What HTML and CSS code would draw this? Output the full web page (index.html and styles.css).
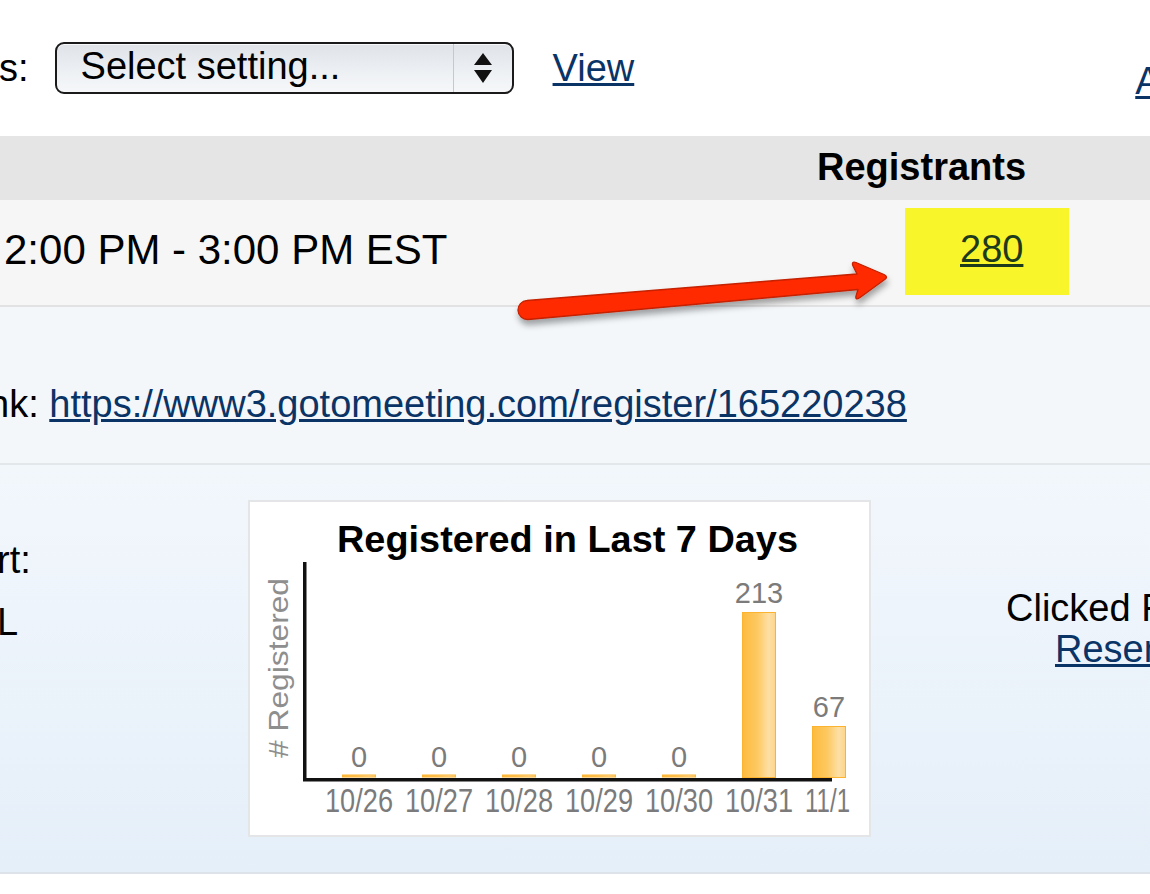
FILE: index.html
```html
<!DOCTYPE html>
<html lang="en">
<head>
    <meta charset="UTF-8">
    <title>Webinar Details</title>
    <link rel="stylesheet" href="styles.css">
</head>
<body>
<div class="page">
    <div class="toolbar">
        <span class="label label-s">s:</span>
        <div class="select">
            <span class="select-text">Select setting...</span>
            <span class="select-arrows">
                <svg width="18" height="30" viewBox="0 0 18 30"><path d="M0 12 L9 0 L18 12 Z M0 17 L18 17 L9 30 Z"/></svg>
            </span>
        </div>
        <a class="link view-link" href="#">View</a>
        <a class="link corner-link" href="#">All Webinars</a>
    </div>

    <div class="table-head">
        <div class="col-when"></div>
        <div class="col-reg">Registrants</div>
    </div>
    <div class="table-row">
        <div class="col-when time">2:00 PM - 3:00 PM EST</div>
        <div class="col-reg">
            <div class="highlight"><a class="count" href="#">280</a></div>
        </div>
    </div>

    <div class="link-row">
        <span class="label label-nk">nk:</span>
        <a class="link" href="#">https://www3.gotomeeting.com/register/165220238</a>
    </div>

    <div class="details">
        <div class="details-labels">
            <div>rt:</div>
            <div>L</div>
        </div>
        <div class="chart">
            <svg width="619" height="333" viewBox="250 502 619 333">
                <defs>
                    <linearGradient id="barFill" x1="0" y1="0" x2="1" y2="0">
                        <stop offset="0" stop-color="#fdbb3e"/>
                        <stop offset="0.45" stop-color="#fdc961"/>
                        <stop offset="0.8" stop-color="#fde0a6"/>
                        <stop offset="1" stop-color="#fdd48a"/>
                    </linearGradient>
                </defs>
                <text class="chart-title" x="567.5" y="552" text-anchor="middle" textLength="461" lengthAdjust="spacingAndGlyphs">Registered in Last 7 Days</text>
                <text class="chart-axis-title" transform="translate(288 668) rotate(-90)" text-anchor="middle" textLength="180" lengthAdjust="spacingAndGlyphs"># Registered</text>

                <rect class="bar" x="342.5" y="775" width="33" height="2"/>
                <rect class="bar" x="422.5" y="775" width="33" height="2"/>
                <rect class="bar" x="502.5" y="775" width="33" height="2"/>
                <rect class="bar" x="582.5" y="775" width="33" height="2"/>
                <rect class="bar" x="662.5" y="775" width="33" height="2"/>
                <rect class="bar" x="742.5" y="612.5" width="33" height="165"/>
                <rect class="bar" x="812.5" y="726.5" width="33" height="51"/>

                <rect class="axis" x="303" y="562" width="3.5" height="219"/>
                <rect class="axis" x="303" y="778" width="529" height="3.5"/>

                <text class="chart-value" x="359" y="767" text-anchor="middle">0</text>
                <text class="chart-value" x="439" y="767" text-anchor="middle">0</text>
                <text class="chart-value" x="519" y="767" text-anchor="middle">0</text>
                <text class="chart-value" x="599" y="767" text-anchor="middle">0</text>
                <text class="chart-value" x="679" y="767" text-anchor="middle">0</text>
                <text class="chart-value" x="759" y="603" text-anchor="middle">213</text>
                <text class="chart-value" x="829" y="717" text-anchor="middle">67</text>

                <text class="chart-date" x="359" y="812" text-anchor="middle" textLength="68" lengthAdjust="spacingAndGlyphs">10/26</text>
                <text class="chart-date" x="439" y="812" text-anchor="middle" textLength="68" lengthAdjust="spacingAndGlyphs">10/27</text>
                <text class="chart-date" x="519" y="812" text-anchor="middle" textLength="68" lengthAdjust="spacingAndGlyphs">10/28</text>
                <text class="chart-date" x="599" y="812" text-anchor="middle" textLength="68" lengthAdjust="spacingAndGlyphs">10/29</text>
                <text class="chart-date" x="679" y="812" text-anchor="middle" textLength="68" lengthAdjust="spacingAndGlyphs">10/30</text>
                <text class="chart-date" x="759" y="812" text-anchor="middle" textLength="68" lengthAdjust="spacingAndGlyphs">10/31</text>
                <text class="chart-date" x="827.5" y="812" text-anchor="middle" textLength="45" lengthAdjust="spacingAndGlyphs">11/1</text>
            </svg>
        </div>
        <div class="clicked">
            <div>Clicked Registration Link</div>
            <a class="link resend" href="#">Resend Link</a>
        </div>
    </div>

    <!-- callout arrow pointing at the count -->
    <svg class="arrow" width="400" height="85" viewBox="505 250 400 85">
        <defs>
            <filter id="arrowShadow" x="-10%" y="-50%" width="120%" height="200%">
                <feDropShadow dx="1" dy="5" stdDeviation="3" flood-color="#000" flood-opacity="0.35"/>
            </filter>
        </defs>
        <path d="M527 300.5 L857 274 L853 266 Q851 261 856 262.5 L884 274.5 Q889 277 884 280 L860 297.5 Q855 301 856 296 L858 289.5 L528 319.5 A9.5 9.5 0 0 1 527 300.5 Z"
              fill="#ff2a00" stroke="#c42000" stroke-width="1.3" stroke-linejoin="round" filter="url(#arrowShadow)"/>
    </svg>
</div>
</body>
</html>
```

FILE: styles.css
```css
* {
    margin: 0;
    padding: 0;
    box-sizing: border-box;
}
body {
    font-family: "Liberation Sans", Arial, Helvetica, sans-serif;
    font-size: 38px;
    color: #000;
    background-color: #fff;
}
.page {
    position: relative;
    width: 1150px;
    height: 894px;
    overflow: hidden;
}
.link {
    color: #0b3466;
    text-decoration: underline;
}

/* top toolbar */
.toolbar {
    display: flex;
    align-items: center;
    height: 136px;
    white-space: nowrap;
}
.toolbar > * {
    flex-shrink: 0;
}
.label-s {
    margin-left: -1px;
}
.select {
    display: flex;
    width: 459px;
    height: 52px;
    margin-left: 26px;
    border: 2px solid #1a1a1a;
    border-radius: 9px;
    background: linear-gradient(#dfe2e6, #eef1f4 60%, #f5f7f9);
    box-shadow: inset 0 1px 0 #f7f8f9;
}
.select-text {
    flex: 1;
    padding-left: 24px;
    padding-bottom: 4px;
    display: flex;
    align-items: center;
}
.select-arrows {
    width: 59px;
    display: flex;
    align-items: center;
    justify-content: center;
    border-left: 1px solid #c5c8cc;
}
.select-arrows svg {
    display: block;
    fill: #111;
}
.view-link {
    margin-left: 39px;
}
.corner-link {
    align-self: flex-start;
    margin-top: 60px;
    margin-left: 501px;
}

/* registrants table */
.table-head,
.table-row {
    display: flex;
}
.col-when {
    width: 817px;
    flex-shrink: 0;
}
.table-head {
    height: 64px;
    background-color: #e5e5e5;
    font-weight: bold;
    line-height: 62px;
}
.table-row {
    height: 107px;
    background-color: #f6f6f6;
    border-bottom: 2px solid #e2e2e2;
}
.time {
    font-size: 42px;
    padding-top: 26px;
    padding-left: 4px;
}
.highlight {
    width: 164px;
    height: 87px;
    margin-top: 8px;
    margin-left: 88px;
    padding-top: 20px;
    padding-left: 55px;
    background-color: #f8f52a;
}
.count {
    color: #1d3a1c;
    text-decoration: underline;
}

/* registration link row */
.link-row {
    height: 158px;
    padding-top: 76px;
    background-color: #f3f7fa;
    border-bottom: 2px solid #e3e7ea;
    white-space: nowrap;
}
.label-nk {
    margin-left: -12px;
}

/* details with chart */
.details {
    display: flex;
    align-items: flex-start;
    height: 409px;
    background: linear-gradient(#f2f7fc, #e5eff9);
    border-bottom: 2px solid #dde3e9;
    white-space: nowrap;
}
.details-labels {
    width: 248px;
    flex-shrink: 0;
    padding-top: 64px;
    line-height: 62px;
    text-indent: -3px;
}
.chart {
    width: 623px;
    height: 337px;
    margin-top: 35px;
    flex-shrink: 0;
    background-color: #fff;
    border: 2px solid #e3e5e7;
}
.chart svg {
    display: block;
}
.chart-title {
    font-family: "Liberation Sans", Arial, sans-serif;
    font-size: 37px;
    font-weight: bold;
    fill: #000;
}
.chart-axis-title {
    font-family: "Liberation Sans", Arial, sans-serif;
    font-size: 28px;
    fill: #8e8e8e;
}
.chart-value {
    font-family: "Liberation Sans", Arial, sans-serif;
    font-size: 29px;
    fill: #7b7b7b;
}
.chart-date {
    font-family: "Liberation Sans", Arial, sans-serif;
    font-size: 33px;
    fill: #7b7b7b;
}
.bar {
    fill: url(#barFill);
    stroke: #fbb330;
    stroke-width: 1;
}
.axis {
    fill: #111;
}
.clicked {
    flex-shrink: 0;
    margin-left: 135px;
    margin-top: 123px;
    line-height: 41px;
}
.resend {
    display: inline-block;
    margin-left: 49px;
}

/* overlay arrow */
.arrow {
    position: absolute;
    left: 505px;
    top: 250px;
    pointer-events: none;
}
```
